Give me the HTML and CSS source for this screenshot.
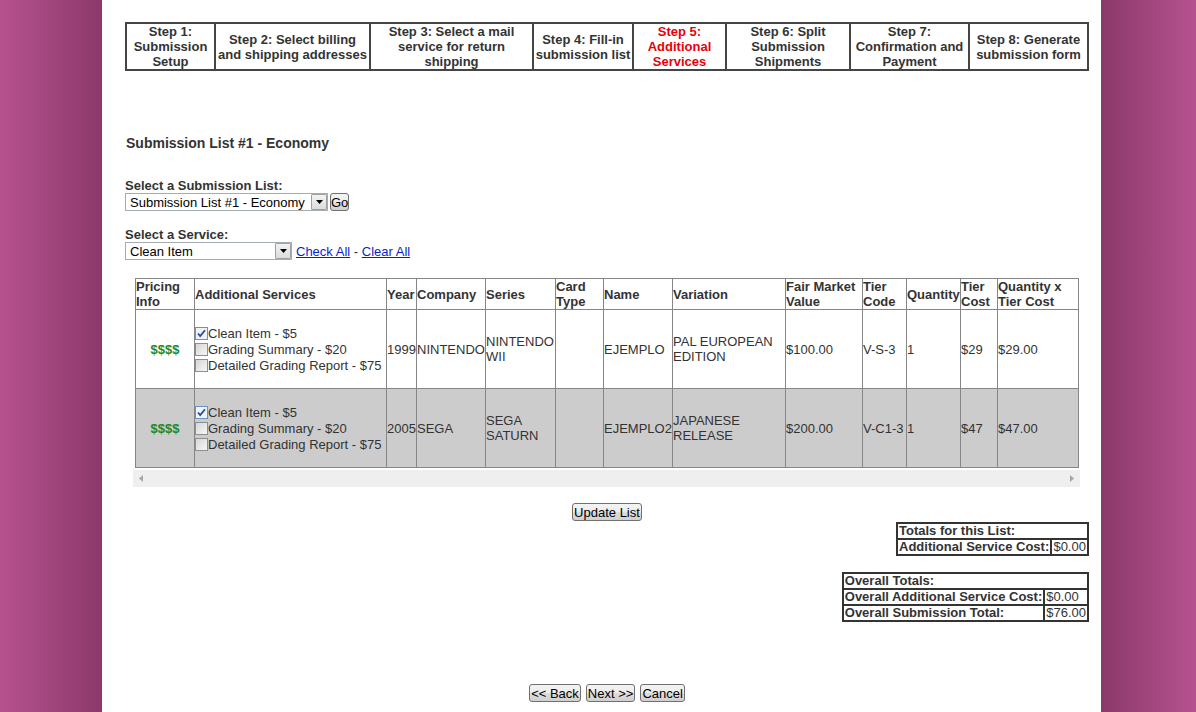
FILE: index.html
```html
<!DOCTYPE html>
<html>
<head>
<meta charset="utf-8">
<title>Additional Services</title>
<link rel="stylesheet" href="styles.css">
</head>
<body>
<div class="page">
  <table class="steps">
    <colgroup>
      <col class="s1"><col class="s2"><col class="s3"><col class="s4"><col class="s5"><col class="s6"><col class="s7"><col class="s8">
    </colgroup>
    <tr>
      <td>Step 1: Submission Setup</td>
      <td>Step 2: Select billing and shipping addresses</td>
      <td>Step 3: Select a mail service for return shipping</td>
      <td>Step 4: Fill-in submission list</td>
      <td class="current">Step 5: Additional Services</td>
      <td>Step 6: Split Submission Shipments</td>
      <td>Step 7: Confirmation and Payment</td>
      <td>Step 8: Generate submission form</td>
    </tr>
  </table>

  <h2 class="list-title">Submission List #1 - Economy</h2>

  <div class="field">
    <div class="field-label">Select a Submission List:</div>
    <div class="field-row">
      <span class="select sel-list"><span class="select-text">Submission List #1 - Economy</span><span class="select-arrow"><svg width="7" height="4" viewBox="0 0 7 4"><path d="M0 0H7L3.5 4Z" fill="#000"/></svg></span></span><button class="btn btn-go">Go</button>
    </div>
  </div>

  <div class="field field-service">
    <div class="field-label">Select a Service:</div>
    <div class="field-row">
      <span class="select sel-service"><span class="select-text">Clean Item</span><span class="select-arrow"><svg width="7" height="4" viewBox="0 0 7 4"><path d="M0 0H7L3.5 4Z" fill="#000"/></svg></span></span>
      <span class="links"><a href="#" class="link">Check All</a> - <a href="#" class="link">Clear All</a></span>
    </div>
  </div>

  <div class="scroll-wrap">
    <table class="items">
      <colgroup>
        <col style="width:59px"><col style="width:192px"><col style="width:30px"><col style="width:69px"><col style="width:70px"><col style="width:48px"><col style="width:69px"><col style="width:113px"><col style="width:77px"><col style="width:44px"><col style="width:54px"><col style="width:37px"><col style="width:81px">
      </colgroup>
      <thead>
        <tr>
          <th>Pricing Info</th>
          <th>Additional Services</th>
          <th class="nw">Year</th>
          <th>Company</th>
          <th>Series</th>
          <th>Card Type</th>
          <th>Name</th>
          <th>Variation</th>
          <th>Fair Market Value</th>
          <th>Tier Code</th>
          <th class="nw">Quantity</th>
          <th>Tier Cost</th>
          <th>Quantity x Tier Cost</th>
        </tr>
      </thead>
      <tbody>
        <tr class="row-odd">
          <td class="price">$$$$</td>
          <td>
            <div class="opt"><svg class="cb" width="13" height="13" viewBox="0 0 13 13"><rect x="0.5" y="0.5" width="12" height="12" fill="#eef3f8" stroke="#6a92c0"/><path d="M3 6.5L5.2 9L10 3.2" fill="none" stroke="#2b4a9a" stroke-width="1.8"/></svg>Clean Item - $5</div>
            <div class="opt"><span class="cb cb-off"></span>Grading Summary - $20</div>
            <div class="opt"><span class="cb cb-off"></span>Detailed Grading Report - $75</div>
          </td>
          <td class="nw">1999</td>
          <td class="nw">NINTENDO</td>
          <td>NINTENDO WII</td>
          <td></td>
          <td>EJEMPLO</td>
          <td>PAL EUROPEAN EDITION</td>
          <td>$100.00</td>
          <td class="nw">V-S-3</td>
          <td>1</td>
          <td>$29</td>
          <td>$29.00</td>
        </tr>
        <tr class="row-even">
          <td class="price">$$$$</td>
          <td>
            <div class="opt"><svg class="cb" width="13" height="13" viewBox="0 0 13 13"><rect x="0.5" y="0.5" width="12" height="12" fill="#eef3f8" stroke="#6a92c0"/><path d="M3 6.5L5.2 9L10 3.2" fill="none" stroke="#2b4a9a" stroke-width="1.8"/></svg>Clean Item - $5</div>
            <div class="opt"><span class="cb cb-off"></span>Grading Summary - $20</div>
            <div class="opt"><span class="cb cb-off"></span>Detailed Grading Report - $75</div>
          </td>
          <td class="nw">2005</td>
          <td class="nw">SEGA</td>
          <td>SEGA SATURN</td>
          <td></td>
          <td class="nw">EJEMPLO2</td>
          <td>JAPANESE RELEASE</td>
          <td>$200.00</td>
          <td class="nw">V-C1-3</td>
          <td>1</td>
          <td>$47</td>
          <td>$47.00</td>
        </tr>
      </tbody>
    </table>
    <div class="hscroll">
      <svg width="4" height="7" viewBox="0 0 4 7"><path d="M4 0V7L0 3.5Z" fill="#a6a6a6"/></svg>
      <svg width="4" height="7" viewBox="0 0 4 7"><path d="M0 0V7L4 3.5Z" fill="#a6a6a6"/></svg>
    </div>
  </div>

  <div class="update-row"><button class="btn">Update List</button></div>

  <table class="totals totals-list">
    <tr><td colspan="2" class="lbl">Totals for this List:</td></tr>
    <tr><td class="lbl">Additional Service Cost:</td><td class="val">$0.00</td></tr>
  </table>

  <table class="totals totals-overall">
    <tr><td colspan="2" class="lbl">Overall Totals:</td></tr>
    <tr><td class="lbl">Overall Additional Service Cost:</td><td class="val">$0.00</td></tr>
    <tr><td class="lbl">Overall Submission Total:</td><td class="val">$76.00</td></tr>
  </table>

  <div class="nav-row">
    <button class="btn">&lt;&lt; Back</button>
    <button class="btn">Next &gt;&gt;</button>
    <button class="btn">Cancel</button>
  </div>
</div>
</body>
</html>
```

FILE: styles.css
```css
html, body {
  margin: 0;
  padding: 0;
  height: 100%;
}
body {
  background: linear-gradient(to right,
    #b6528f 0px, #8b396b 102px, #ffffff 102px, #ffffff 1101px,
    #8b396b 1101px, #b6528f 1196px);
  font-family: "Liberation Sans", Arial, sans-serif;
  font-size: 13px;
  line-height: 15px;
  color: #333;
}
.page {
  width: 964px;
  margin-left: 102px;
  padding: 22px 12px 40px 23px;
  background: #fff;
  min-height: 650px;
}

/* Steps */
.steps {
  width: 964px;
  table-layout: fixed;
  border-collapse: separate;
  border-spacing: 0;
  border: 1px solid #454545;
}
.steps td {
  border: 1px solid #454545;
  padding: 0;
  text-align: center;
  vertical-align: middle;
  font-weight: bold;
  color: #333;
  height: 45px;
  line-height: 15px;
}
.steps td.current { color: #e8000b; }
.s1 { width: 89px; }
.s2 { width: 155px; }
.s3 { width: 163px; }
.s4 { width: 100px; }
.s5 { width: 93px; }
.s6 { width: 124px; }
.s7 { width: 119px; }
.s8 { width: 119px; }

.list-title {
  font-size: 14px;
  font-weight: bold;
  margin: 65px 0 0 1px;
  line-height: 15px;
}

.field { margin-top: 27px; }
.field-service { margin-top: 16px; }
.field-label { font-weight: bold; line-height: 15px; }
.field-row {
  display: flex;
  align-items: center;
  height: 18px;
}
.select {
  display: inline-flex;
  align-items: center;
  justify-content: space-between;
  box-sizing: border-box;
  height: 18px;
  border: 1px solid #a5acb5;
  background: #fff;
  color: #000;
  padding: 0 0 0 4px;
}
.sel-list { width: 203px; }
.sel-service { width: 167px; }
.select-text { white-space: nowrap; line-height: 15px; }
.select-arrow {
  display: flex;
  align-items: center;
  justify-content: center;
  box-sizing: border-box;
  width: 16px;
  height: 16px;
  border: 1px solid #a0a0a0;
  background: linear-gradient(#f3f3f3, #dcdcdc);
  border-radius: 1px;
}
.btn {
  font-family: "Liberation Sans", Arial, sans-serif;
  font-size: 13px;
  line-height: 15px;
  color: #000;
  border: 1px solid #707070;
  border-radius: 3px;
  background: linear-gradient(#f4f4f4 0%, #ececec 50%, #dedede 51%, #d0d0d0 100%);
  padding: 0 1px;
  height: 18px;
  margin: 0;
}
.btn-go { margin-left: 2px; padding: 0; width: 19px; }
.links {
  margin-left: 4px;
  color: #333;
  white-space: pre;
}
.link {
  color: #0a1fc9;
  text-decoration: underline;
}

/* Items table */
.scroll-wrap {
  width: 947px;
  margin: 18px 0 0 8px;
}
.items {
  margin-left: 2px;
  width: 944px;
  table-layout: fixed;
  border-collapse: collapse;
  border: 1px solid #868686;
}
.items th, .items td {
  border: 1px solid #868686;
  padding: 0;
  text-align: left;
  vertical-align: middle;
  line-height: 15px;
  overflow: hidden;
}
.items th {
  font-weight: bold;
  height: 30px;
  color: #333;
}
.items td {
  height: 78px;
  color: #333;
}
.items .nw { white-space: nowrap; }
.row-even td { background: #cccccc; }
.items td.price {
  text-align: center;
  font-weight: bold;
  color: #1f8a24;
}
.opt {
  display: flex;
  align-items: center;
  height: 16px;
  white-space: nowrap;
}
.cb {
  flex: none;
  display: inline-block;
  box-sizing: border-box;
  width: 13px;
  height: 13px;
}
.cb-off {
  border: 1px solid #8e8f8f;
  background: linear-gradient(135deg, #d6d6d6, #f7f7f7);
}
.hscroll {
  margin-top: 2px;
  height: 17px;
  background: #efefef;
  display: flex;
  align-items: center;
  justify-content: space-between;
  padding: 0 6px;
}

.update-row {
  display: flex;
  justify-content: center;
  margin-top: 16px;
}

.totals {
  margin-left: auto;
  border-collapse: separate;
  border-spacing: 0;
  border: 1px solid #333;
}
.totals td {
  border: 1px solid #333;
  padding: 0 1px;
  line-height: 14px;
  white-space: nowrap;
}
.totals .lbl { font-weight: bold; }
.totals .val { font-weight: normal; }
.totals-list { margin-top: 1px; width: 193px; }
.totals-overall { margin-top: 16px; width: 247px; }

.nav-row {
  display: flex;
  justify-content: center;
  gap: 5px;
  margin-top: 62px;
}
```
